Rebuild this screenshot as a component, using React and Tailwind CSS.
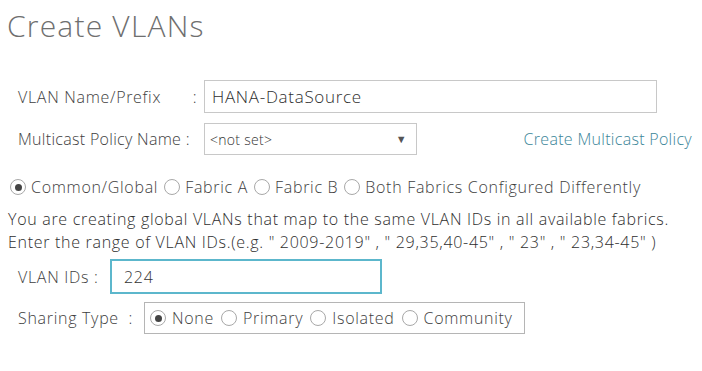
import React from 'react';

const Radio = ({ checked }) => (
  <span className="inline-flex items-center justify-center w-[16px] h-[16px] rounded-full border border-[#a8a8a8] bg-white shrink-0">
    {checked && <span className="w-[7px] h-[7px] rounded-full bg-[#444]"></span>}
  </span>
);

const App = () => {
  return (
    <div className="w-[702px] h-[371px] bg-white text-[16px] font-light tracking-[0.7px] text-[#3e3e3e] overflow-hidden" style={{ fontFamily: '"Open Sans", "Liberation Sans", sans-serif' }}>
      <h1 className="pl-[7px] pt-[9px] text-[30px] font-light tracking-[1.2px] text-[#6f6f6f] leading-[34px]">Create VLANs</h1>

      {/* name + policy */}
      <div className="pl-[18px] pt-[37px] flex flex-col gap-[10px]">
        <div className="flex items-center">
          <span className="w-[168px]">VLAN Name/Prefix</span>
          <span className="w-[18px] text-center">:</span>
          <div className="w-[453px] h-[33px] border border-[#c8c8c8] flex items-center px-[7px] text-[#2e2e2e] text-[17px]">HANA-DataSource</div>
        </div>
        <div className="flex items-center">
          <span className="w-[186px] tracking-[0.3px]">Multicast Policy Name :</span>
          <div className="w-[213px] h-[32px] border border-[#c8c8c8] flex items-center justify-between pl-[5px] pr-[9px] text-[#333] text-[14px] tracking-[0.3px]">
            <span>&lt;not set&gt;</span>
            <span className="text-[11px] text-[#555]">▼</span>
          </div>
          <span className="ml-auto mr-[10px] text-[#3a8598] text-[16px] tracking-[0.3px]">Create Multicast Policy</span>
        </div>
      </div>

      {/* fabrics */}
      <div className="pl-[10px] pt-[20px] flex items-center gap-[5px]">
        <Radio checked />
        <span className="mr-[1px]">Common/Global</span>
        <Radio />
        <span className="mr-[1px]">Fabric A</span>
        <Radio />
        <span className="mr-[1px]">Fabric B</span>
        <Radio />
        <span>Both Fabrics Configured Differently</span>
      </div>

      <div className="pl-[8px] pt-[9px] leading-[23px] text-[#2e2e2e]">
        <p>You are creating global VLANs that map to the same VLAN IDs in all available fabrics.</p>
        <p>Enter the range of VLAN IDs.(e.g. " 2009-2019" , " 29,35,40-45" , " 23" , " 23,34-45" )</p>
      </div>

      <div className="pl-[18px] pt-[5px] flex items-center">
        <span className="w-[92px]">VLAN IDs :</span>
        <div className="w-[272px] h-[35px] border-2 border-[#5cb7cc] flex items-center px-[12px] text-[#333]">224</div>
      </div>

      <div className="pl-[18px] pt-[8px] flex items-center">
        <span className="w-[126px]">Sharing Type&nbsp; :</span>
        <div className="w-[381px] h-[32px] border border-[#b5b5b5] flex items-center gap-[6px] pl-[5px]">
          <Radio checked />
          <span className="mr-[1px]">None</span>
          <Radio />
          <span className="mr-[1px]">Primary</span>
          <Radio />
          <span className="mr-[1px]">Isolated</span>
          <Radio />
          <span>Community</span>
        </div>
      </div>
    </div>
  );
};

export default App;
